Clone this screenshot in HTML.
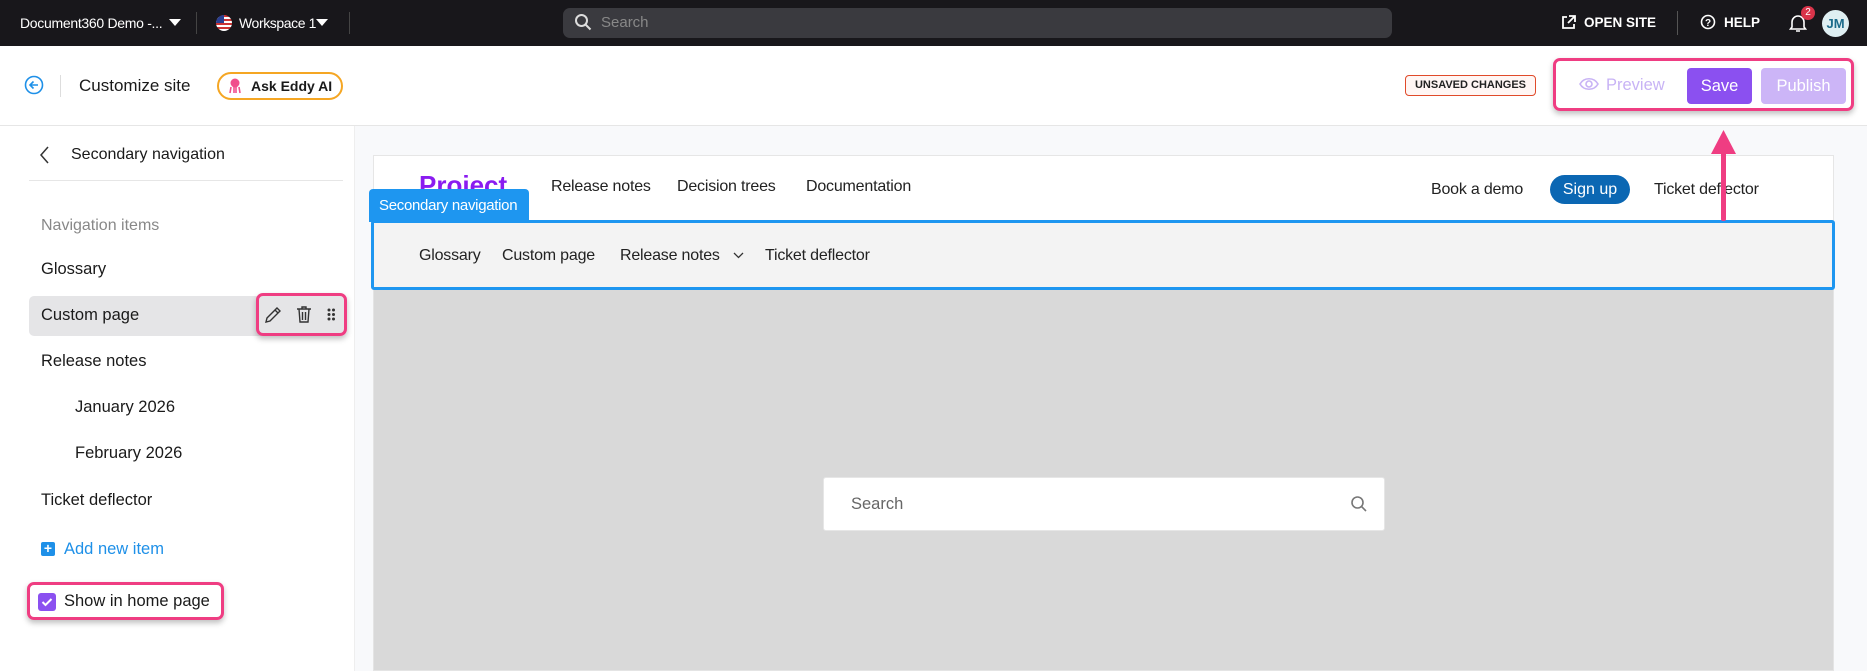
<!DOCTYPE html>
<html><head><meta charset="utf-8"><style>
*{box-sizing:border-box;margin:0;padding:0}
body{width:1867px;height:671px;overflow:hidden;background:#fff;font-family:"Liberation Sans",sans-serif;color:#1a1a1a;position:relative}
.a{position:absolute;white-space:nowrap}
.top{left:0;top:0;width:1867px;height:46px;background:#18171b}
.w{color:#fff;font-size:15px}
.side{left:0;top:126px;width:355px;height:545px;background:#fff;border-right:1px solid #eee}
.it{font-size:16.5px;color:#1a1a1a}
.pv{left:355px;top:126px;width:1512px;height:545px;background:#f8f9fb}
.pink{border:3px solid #ef3d82;border-radius:7px;box-shadow:0 3px 6px rgba(0,0,0,.25)}
.n{font-size:16px;color:#222;letter-spacing:-0.2px}
</style></head><body>
<div class="a top"></div>
<div class="a w" style="left:20px;top:15px;font-size:14px;letter-spacing:-0.3px">Document360 Demo -...</div>
<svg class="a" style="left:169px;top:19px" width="12" height="8"><path d="M0 0h12L6 7z" fill="#fff"/></svg>
<div class="a" style="left:196px;top:12px;width:1px;height:22px;background:#444"></div>
<div class="a" style="left:216px;top:15px;width:16px;height:16px;border-radius:50%;background:repeating-linear-gradient(#c33 0 2px,#fff 2px 4px);overflow:hidden"><div style="width:8px;height:8px;background:#2a3f8f"></div></div>
<div class="a w" style="left:239px;top:15px;font-size:14px;letter-spacing:-0.4px">Workspace 1</div>
<svg class="a" style="left:316px;top:19px" width="12" height="8"><path d="M0 0h12L6 7z" fill="#fff"/></svg>
<div class="a" style="left:349px;top:12px;width:1px;height:22px;background:#444"></div>
<div class="a" style="left:563px;top:8px;width:829px;height:30px;background:#3a3a3f;border-radius:7px"></div>
<svg class="a" style="left:574px;top:13px" width="18" height="18"><circle cx="7.5" cy="7.5" r="5.5" stroke="#ddd" stroke-width="2" fill="none"/><path d="M11.5 11.5l5 5" stroke="#ddd" stroke-width="2"/></svg>
<div class="a" style="left:601px;top:14px;font-size:15px;color:#888">Search</div>
<svg class="a" style="left:1561px;top:15px" width="15" height="15"><path d="M6 2H2v11h11V9M8 1h6v6M14 1L7 8" stroke="#fff" stroke-width="1.8" fill="none"/></svg>
<div class="a w" style="left:1584px;top:15px;font-size:13.5px;font-weight:bold">OPEN SITE</div>
<div class="a" style="left:1677px;top:11px;width:1px;height:24px;background:#555"></div>
<svg class="a" style="left:1700px;top:14px" width="16" height="16"><circle cx="8" cy="8" r="6.5" stroke="#fff" stroke-width="1.6" fill="none"/><text x="8" y="12" font-size="10" font-weight="bold" fill="#fff" text-anchor="middle" font-family="Liberation Sans">?</text></svg>
<div class="a w" style="left:1724px;top:15px;font-size:13.5px;font-weight:bold">HELP</div>
<svg class="a" style="left:1789px;top:13px" width="18" height="20"><path d="M3 14V9a6 6 0 0 1 12 0v5l1.5 2h-15zM7 18h4" stroke="#fff" stroke-width="1.6" fill="none"/></svg>
<div class="a" style="left:1801px;top:6px;width:14px;height:14px;border-radius:50%;background:#d9344a;color:#fff;font-size:10px;text-align:center;line-height:14px">2</div>
<div class="a" style="left:1822px;top:10px;width:27px;height:27px;border-radius:50%;background:#dfeff2;color:#1b6b8a;font-size:13px;font-weight:bold;text-align:center;line-height:27px">JM</div>

<div class="a" style="left:0;top:125px;width:1867px;height:1px;background:#e6e6e6"></div>
<svg class="a" style="left:24px;top:75px" width="20" height="20"><circle cx="10" cy="10" r="8.5" stroke="#1e90e8" stroke-width="1.6" fill="none"/><path d="M14 10H6M9.5 6.5L6 10l3.5 3.5" stroke="#1e90e8" stroke-width="1.6" fill="none"/></svg>
<div class="a" style="left:60px;top:75px;width:1px;height:22px;background:#ddd"></div>
<div class="a" style="left:79px;top:76px;font-size:17px">Customize site</div>
<div class="a" style="left:217px;top:72px;width:126px;height:28px;border:2px solid #f5a623;border-radius:14px"></div>
<svg class="a" style="left:228px;top:78px" width="14" height="16"><circle cx="7" cy="5" r="4.5" fill="#f04e8c"/><path d="M3 9l-1 6M6 9v6M8 9v6M11 9l1 6" stroke="#f04e8c" stroke-width="1.6"/></svg>
<div class="a" style="left:251px;top:78px;font-size:14px;font-weight:bold">Ask Eddy AI</div>
<div class="a" style="left:1405px;top:75px;width:131px;height:21px;border:1px solid #e04a2a;border-radius:4px;background:#fff6f4;font-size:11px;font-weight:bold;text-align:center;line-height:19px;color:#222">UNSAVED CHANGES</div>
<div class="a pink" style="left:1553px;top:58px;width:301px;height:53px"></div>
<svg class="a" style="left:1579px;top:77px" width="20" height="14"><path d="M1 7C5 0 15 0 19 7C15 14 5 14 1 7z" stroke="#c8b3f5" stroke-width="1.6" fill="none"/><circle cx="10" cy="7" r="3" stroke="#c8b3f5" stroke-width="1.6" fill="none"/></svg>
<div class="a" style="left:1606px;top:76px;font-size:16.5px;color:#c8b3f5">Preview</div>
<div class="a" style="left:1687px;top:68px;width:65px;height:36px;background:#8b50f0;border-radius:4px;color:#fff;font-size:16.5px;text-align:center;line-height:36px">Save</div>
<div class="a" style="left:1761px;top:68px;width:85px;height:36px;background:#ccb5f7;border-radius:4px;color:#fff;font-size:16.5px;text-align:center;line-height:36px">Publish</div>

<div class="a side"></div>
<svg class="a" style="left:40px;top:146px" width="10" height="18"><path d="M8 1L1 9l7 8" stroke="#333" stroke-width="1.5" fill="none"/></svg>
<div class="a" style="left:71px;top:146px;font-size:16px">Secondary navigation</div>
<div class="a" style="left:29px;top:180px;width:314px;height:1px;background:#e6e6e6"></div>
<div class="a" style="left:41px;top:217px;font-size:16px;color:#888">Navigation items</div>
<div class="a it" style="left:41px;top:260px">Glossary</div>
<div class="a" style="left:29px;top:296px;width:316px;height:40px;background:#e5e5e7;border-radius:5px"></div>
<div class="a it" style="left:41px;top:306px">Custom page</div>
<div class="a pink" style="left:256px;top:293px;width:91px;height:43px"></div>
<svg class="a" style="left:264px;top:306px" width="18" height="18"><path d="M2 16l1-4L13 2l3 3L6 15zM11 4l3 3" stroke="#333" stroke-width="1.4" fill="none"/></svg>
<svg class="a" style="left:296px;top:305px" width="16" height="18"><path d="M1 4h14M6 4V2h4v2M3 4l1 13h8l1-13M6.5 7v8M9.5 7v8" stroke="#333" stroke-width="1.4" fill="none"/></svg>
<svg class="a" style="left:327px;top:308px" width="8" height="13"><g fill="#333"><circle cx="2" cy="2" r="1.5"/><circle cx="6.5" cy="2" r="1.5"/><circle cx="2" cy="6.5" r="1.5"/><circle cx="6.5" cy="6.5" r="1.5"/><circle cx="2" cy="11" r="1.5"/><circle cx="6.5" cy="11" r="1.5"/></g></svg>
<div class="a it" style="left:41px;top:352px">Release notes</div>
<div class="a it" style="left:75px;top:398px">January 2026</div>
<div class="a it" style="left:75px;top:444px">February 2026</div>
<div class="a it" style="left:41px;top:491px">Ticket deflector</div>
<div class="a" style="left:41px;top:542px;width:14px;height:14px;background:#1e90e8;border-radius:2px;color:#fff;font-size:14px;line-height:13px;text-align:center;font-weight:bold">+</div>
<div class="a" style="left:64px;top:540px;font-size:16.5px;color:#1e90e8">Add new item</div>
<div class="a pink" style="left:27px;top:582px;width:197px;height:38px"></div>
<div class="a" style="left:38px;top:593px;width:18px;height:18px;background:#8b50f0;border-radius:3px"></div>
<svg class="a" style="left:41px;top:597px" width="12" height="10"><path d="M1.5 5l3 3 6-6" stroke="#fff" stroke-width="2" fill="none"/></svg>
<div class="a it" style="left:64px;top:592px">Show in home page</div>

<div class="a pv"></div>
<div class="a" style="left:373px;top:155px;width:1461px;height:516px;background:#d9d9d9;border:1px solid #e4e4e4"></div>
<div class="a" style="left:373px;top:155px;width:1461px;height:66px;background:#fff;border:1px solid #e6e6e6"></div>
<div class="a" style="left:419px;top:170px;font-size:26px;font-weight:bold;color:#8a1cf0">Project</div>
<div class="a n" style="left:551px;top:178px">Release notes</div>
<div class="a n" style="left:677px;top:178px">Decision trees</div>
<div class="a n" style="left:806px;top:178px">Documentation</div>
<div class="a n" style="left:1431px;top:181px">Book a demo</div>
<div class="a" style="left:1550px;top:175px;width:80px;height:29px;background:#0b67b3;border-radius:15px;color:#fff;font-size:16px;text-align:center;line-height:29px">Sign up</div>
<div class="a n" style="left:1654px;top:181px">Ticket deflector</div>
<div class="a" style="left:371px;top:220px;width:1464px;height:70px;background:#f3f3f3;border:3px solid #1e96f0;border-radius:3px"></div>
<div class="a" style="left:369px;top:189px;width:160px;height:33px;background:#1e96f0;border-radius:4px 4px 0 0;color:#fff;font-size:15px;letter-spacing:-0.3px;line-height:33px;padding-left:10px">Secondary navigation</div>
<div class="a n" style="left:419px;top:247px">Glossary</div>
<div class="a n" style="left:502px;top:247px">Custom page</div>
<div class="a n" style="left:620px;top:247px">Release notes</div>
<svg class="a" style="left:733px;top:252px" width="11" height="7"><path d="M1 1l4.5 4.5L10 1" stroke="#333" stroke-width="1.3" fill="none"/></svg>
<div class="a n" style="left:765px;top:247px">Ticket deflector</div>
<div class="a" style="left:823px;top:477px;width:562px;height:54px;background:#fff;border:1px solid #e6e6e6;border-radius:3px"></div>
<div class="a" style="left:851px;top:495px;font-size:16.5px;color:#666">Search</div>
<svg class="a" style="left:1350px;top:495px" width="18" height="18"><circle cx="7.5" cy="7.5" r="5.5" stroke="#777" stroke-width="1.6" fill="none"/><path d="M11.5 11.5l4.5 4.5" stroke="#777" stroke-width="1.6"/></svg>
<div class="a" style="left:1721px;top:150px;width:5px;height:71px;background:#ef3d82;border-radius:2px"></div>
<svg class="a" style="left:1711px;top:130px" width="25" height="24"><path d="M12.5 0L25 24H0z" fill="#ef3d82"/></svg>
</body></html>
